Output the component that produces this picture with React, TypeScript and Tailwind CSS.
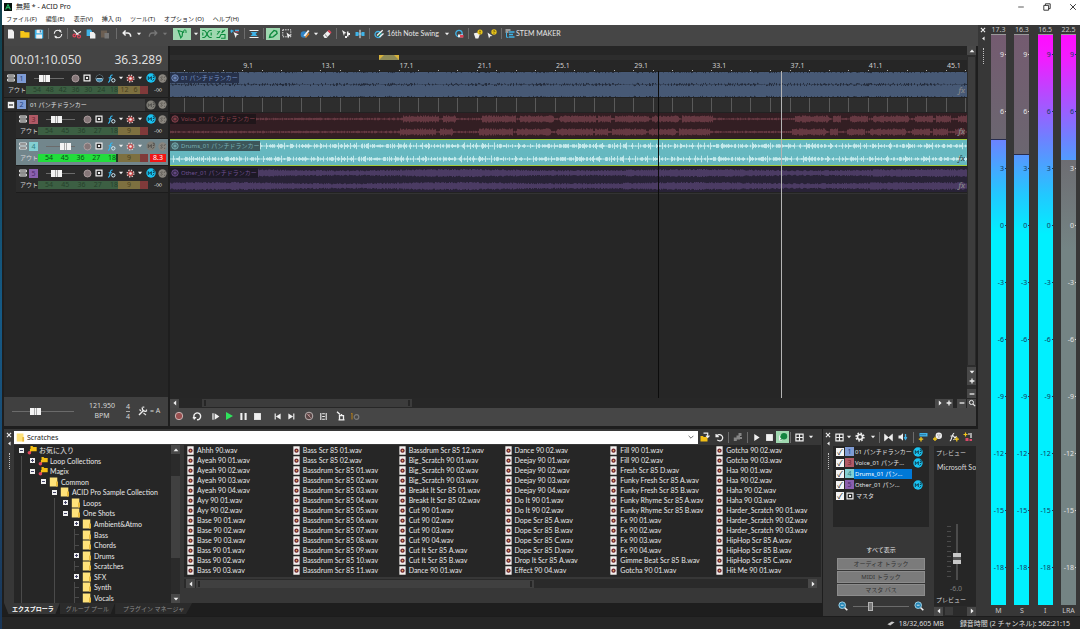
import type { ReactNode } from 'react'
import { useState } from 'react'
import clsx from 'clsx'

/* ---------- icons, all on a 10x10 grid ---------- */

const W = '#f0f0f0'
const BLUE = '#3fb3e8'
const GREEN = '#0b8a3c'

const glyphs: Record<string, ReactNode> = {
  new: <path d="M2 .5h4.2L8 2.400V9.500H2z" fill={W} />,
  open: <path d="M.3 2h3.500l1 1.200h4.700v5.600H.3z" fill="#f6c618" />,
  save: (
    <>
      <path d="M.8.8h8.400v8.600H.8z" fill={BLUE} />
      <path d="M2.600.8h5v3.400h-5zM2.200 5.600h5.800v3.800H2.200z" fill={W} />
      <path d="M5.800 1.200h1v2.200h-1z" fill="#1c4f86" />
    </>
  ),
  props: (
    <>
      <circle cx="5" cy="5" r="3.700" fill="none" stroke={W} strokeWidth="1.100" strokeDasharray="9.600 2" />
      <path d="M6.500.3l2 1.600-2.300 1zM3.500 9.700L1.500 8l2.300-1z" fill={W} />
    </>
  ),
  cut: (
    <>
      <path d="M1.500 1l5 5M9 2.500L3.500 5.800" stroke={W} strokeWidth="1.100" />
      <circle cx="7" cy="7.500" r="1.500" fill="none" stroke="#e0455a" strokeWidth="1.200" />
      <circle cx="2.400" cy="6.500" r="1.400" fill="none" stroke="#e0455a" strokeWidth="1.200" />
    </>
  ),
  copy: (
    <>
      <path d="M.6.6h4l1.400 1.400v5H.6z" fill={BLUE} />
      <path d="M4 3h3.500L9.400 5v4.600H4z" fill={W} />
    </>
  ),
  paste: (
    <>
      <path d="M1 1.500h6v7H1z" fill="#6b5e52" />
      <path d="M4.500 4H9v5.500H4.500z" fill="#777" />
    </>
  ),
  undo: <path d="M1.200 4h4.300c2.400 0 3.200 1.600 3.200 3.800M3.600 1.500L1.200 4l2.400 2.500" fill="none" stroke={W} strokeWidth="1.500" />,
  redo: <path d="M8.800 4H4.500C2.100 4 1.300 5.600 1.300 7.800M6.400 1.500L8.800 4 6.400 6.500" fill="none" stroke="#777" strokeWidth="1.300" />,
  caret: <path d="M1.500 3h7L5 7.200z" fill={W} />,
  caretDim: <path d="M1.500 3h7L5 7.200z" fill="#777" />,
  snap: (
    <>
      <path d="M1.200 1.500l4.300 1.300-.3 4.200L3.800 8.800z" fill="none" stroke={GREEN} strokeWidth="1.100" />
      <path d="M6.700 4V1.800c0-1.200 2.300-1.200 2.300 0V4" fill="none" stroke={GREEN} />
    </>
  ),
  crossfade: (
    <path d="M.3 1.500h1.700c3 0 3 7 6 7h1.700M.3 8.500h1.700c3 0 3-7 6-7h1.700M.8 3.500v3M9.200 3.500v3" fill="none" stroke={GREEN} strokeWidth="1.100" />
  ),
  ripple: (
    <path d="M.5 8.500h3l1.500-3h4v3.700H5M1 5.500l3-3.500M5.500 4L8.800 1M1.500 2.500h1M6 2h1.500" fill="none" stroke={GREEN} strokeWidth="1.100" />
  ),
  lock: (
    <>
      <path d="M3.500 3l5.500 2.400-2.400.9L5.700 9z" fill={W} />
      <path d="M.5 2h3M1.500.8v3M5 1.500h4" stroke={BLUE} strokeWidth="1.300" />
      <path d="M5.500 2.800h3" stroke="#e0455a" />
    </>
  ),
  envelope: (
    <>
      <path d="M.5 1.500h9M.5 8.500h9" stroke={W} />
      <path d="M1.500 3h7l-2 2 2 2h-7l2-2z" fill={BLUE} />
    </>
  ),
  pencil: <path d="M1.500 8.500l.7-3L6 1.500l2.600.8.5 2.200-4 3.300z" fill="none" stroke={GREEN} strokeWidth="1.300" />,
  select: (
    <>
      <path d="M.8.8h8v7h-8z" fill="none" stroke={W} strokeDasharray="1.300 1.100" />
      <path d="M4.500 3.500l5 3.600-2.200.2L6 9.500z" fill={W} />
    </>
  ),
  brush: (
    <>
      <circle cx="4" cy="5.500" r="3.300" fill="#2f83c5" />
      <path d="M3.500 6.500L8 1l1.500 1L5.200 7.400z" fill={W} />
      <path d="M5.500 8.500L9 4.500" stroke="#f08a24" strokeWidth="1.400" />
    </>
  ),
  eraser: (
    <>
      <path d="M1 6.500L5.500 2l3 2.800L4.500 9h-2z" fill={W} />
      <path d="M5.500 2L7 .7l2.500 2.600-1 1.500z" fill="#e0455a" />
      <path d="M3 5.600L5.500 8" stroke="#777" />
    </>
  ),
  arrows: <path d="M1 1l4.500 3-2 .6L3 7zM6 2.500h1.500v1.600H9V6H7.500v1.600H6zM4 7h2v2H4z" fill={W} />,
  split: (
    <>
      <path d="M.5 3h3v4h-3zM6.500 3h3v4h-3zM3.500 4.500h3v1h-3z" fill={BLUE} />
      <path d="M5 .8v8.400" stroke={W} />
    </>
  ),
  groove: (
    <>
      <circle cx="4" cy="5.500" r="3" fill="none" stroke={BLUE} strokeWidth="1.300" />
      <path d="M3 6.500L8.700 1.200M5.500 8l4-3.500" stroke={W} strokeWidth="1.300" />
      <path d="M4 7L7 4.300" stroke="#27b06d" />
    </>
  ),
  grooveClear: (
    <>
      <circle cx="5" cy="4.500" r="3.200" fill="none" stroke={BLUE} strokeWidth="1.300" />
      <path d="M4 5.500h5v2.800H4z" fill={W} />
      <path d="M6 6h3.500v2.500H6z" fill="#e0455a" />
    </>
  ),
  hint: (
    <>
      <path d="M.8 4.500c2-1 5-1 6 1l-1.500 4H2.500z" fill={W} />
      <circle cx="7" cy="3" r="2.600" fill="#e8c41c" />
      <path d="M7 1.600v1.800M7 4v.7" stroke="#4a3c00" />
    </>
  ),
  help: (
    <>
      <path d="M.5 3.500l5 3.500-2.300.3L2 9.500z" fill={W} />
      <circle cx="7" cy="3" r="2.700" fill="#e8c41c" />
      <path d="M6.200 2.300c.3-1 1.800-.8 1.600.2L7 3.400M7 4v.7" fill="none" stroke="#4a3c00" strokeWidth=".8" />
    </>
  ),
  stem: (
    <>
      <path d="M.5 1h5M.5 3h3" stroke={W} strokeWidth="1.200" />
      <path d="M4 3h5.500M4 5.500h4M4 8h5.500" stroke={BLUE} strokeWidth="1.400" />
      <path d="M1.500 3.500v4.800h2" fill="none" stroke={BLUE} />
    </>
  ),
  rec: <circle cx="5" cy="5" r="3.700" fill="#9a5050" stroke="#c9b4b4" strokeWidth="1" />,
  arm: <circle cx="5" cy="5" r="3.900" fill="#857678" stroke="#b8a8aa" strokeWidth=".9" />,
  loop: <path d="M2.300 7A3.400 3.400 0 1 1 5 8.700M.8 6.800h3.400M2.300 8.600V6" fill="none" stroke={W} strokeWidth="1.400" />,
  playStart: <path d="M1.500 1.500h1.400v7H1.500zM4 1.500L9.300 5 4 8.500z" fill={W} />,
  playGreen: <path d="M2 1l7 4-7 4z" fill="#2fe35c" />,
  play: <path d="M2.500 1l6 4-6 4z" fill={W} />,
  pause: <path d="M1.500 1h2.300v8H1.500zM6.200 1h2.300v8H6.200z" fill={W} />,
  stop: <path d="M1.200 1.200h7.600v7.600H1.200z" fill={W} />,
  prev: <path d="M1.800 1.800h1.300v6.400H1.800zM8.500 1.800v6.400L3.200 5z" fill={W} />,
  next: <path d="M6.900 1.800h1.300v6.400H6.900zM1.500 1.800v6.400L6.800 5z" fill={W} />,
  recMode: (
    <>
      <circle cx="5" cy="5" r="3.800" fill="#5b4747" stroke="#b9b0b0" />
      <path d="M3.300 3.300l1.700 1.700M5 3v2l1.700 1.700" stroke="#d0a5a5" fill="none" strokeWidth=".8" />
    </>
  ),
  chop: <path d="M2 1v8M8 1v8M3.500 2h3M3.500 5h3M3.500 8h3" stroke={W} strokeWidth="1.200" />,
  metronome: <path d="M1 .8l3 2.800M3.500 8.800V4.600h4v4.200zM4.800 3.600h1.400M2.500 8.800h6" fill="none" stroke={W} strokeWidth="1.300" />,
  metronomeDim: (
    <>
      <path d="M2 2v6.500M1 2.500h1" stroke="#a8761c" strokeWidth="1.200" />
      <circle cx="6.500" cy="6" r="2.300" fill="none" stroke="#7d7d7d" strokeWidth="1.200" />
    </>
  ),
  lanes: <path d="M.8 1.200h8.400v2.600H.8zM.8 6.200h8.400v2.600H.8z" fill="#555" stroke="#e8e8e8" strokeWidth="1.200" />,
  minusBox: (
    <>
      <path d="M1 1h8v8H1z" fill={W} />
      <path d="M2.500 5h5" stroke="#222" strokeWidth="1.400" />
    </>
  ),
  bus: (
    <>
      <path d="M1.300 1.300h7.400v7.400H1.300z" fill="#222" stroke={W} strokeWidth="1.500" />
      <path d="M3.700 3.700h2.600v2.600H3.700z" fill={W} />
    </>
  ),
  echo: (
    <>
      <circle cx="5" cy="5" r="3.900" fill="#3f88ae" stroke="#8fb0c0" strokeWidth="1" />
      <path d="M1.200 5h7.600a3.800 3.800 0 0 0-7.600 0z" fill="#222" />
      <path d="M2 5h6" stroke="#d6e6ee" strokeWidth=".8" />
    </>
  ),
  fx: (
    <>
      <path d="M1.200 9c1.600.3 1.800-1.500 2.200-4S4.300.8 6.200 1.200M1.800 4.200h3.600" fill="none" stroke="#35b6ee" strokeWidth="1.300" />
      <circle cx="7" cy="7" r="1.900" fill="none" stroke="#cfeaf6" strokeWidth="1.100" />
    </>
  ),
  gear: (
    <>
      <circle cx="5" cy="5" r="3.700" fill="none" stroke="#e8c4c4" strokeWidth="1.600" strokeDasharray="1.500 1.400" />
      <circle cx="5" cy="5" r="2.900" fill="#c94c4c" />
      <circle cx="5" cy="5" r="1.400" fill="#f6e6e6" />
    </>
  ),
  cog: (
    <>
      <circle cx="5" cy="5" r="3.900" fill="none" stroke={W} strokeWidth="1.500" strokeDasharray="1.600 1.460" />
      <circle cx="5" cy="5" r="2.500" fill="none" stroke={W} strokeWidth="1.600" />
    </>
  ),
  mute: (
    <>
      <circle cx="5" cy="5" r="4.700" fill="#19c3f2" />
      <path d="M2.300 7V3.600l1.500 2 1.500-2V7M6.800 2.200h1.400v2.300H6.800M6.500 7.500l1.800-1.500" fill="none" stroke="#0f3442" strokeWidth=".9" />
    </>
  ),
  muteOff: (
    <>
      <circle cx="5" cy="5" r="4.600" fill="#828079" />
      <path d="M2.300 7V3.600l1.500 2 1.500-2V7M6.800 2.200h1.400v2.300H6.800M6.500 7.500l1.800-1.500" fill="none" stroke="#4c4b47" strokeWidth=".9" />
    </>
  ),
  solo: (
    <>
      <circle cx="5" cy="5" r="4.600" fill="#8a867f" />
      <path d="M5.300 3.500c-1.500-.8-3 .2-1.600 1.300 1.700.8 1.400 2.600-1 1.900M6.500 4.500L8.300 2.300M6.700 7h1.300" fill="none" stroke="#55524b" strokeWidth=".9" />
    </>
  ),
  clip: (
    <>
      <circle cx="5" cy="5" r="4" fill="none" stroke="currentColor" strokeWidth="1.200" />
      <path d="M5 1.500v7M2 3.200l6 3.600M8 3.200L2 6.800" fill="none" stroke="currentColor" strokeWidth="1.100" />
    </>
  ),
  folder: (
    <>
      <path d="M.8.5h7.500v9H.8z" fill="#ffe27a" />
      <path d="M7 4.500h2v5H7z" fill="#e8b93c" />
    </>
  ),
  favorite: (
    <>
      <path d="M3.500 1h2l.8 1h3.400v4.200H3.500z" fill="#f3bf15" />
      <path d="M3.500 4v3" stroke="#f3bf15" strokeWidth="1.200" />
      <circle cx="2.400" cy="7.800" r="1.800" fill="#e0455a" />
    </>
  ),
  wav: (
    <>
      <path d="M1.500.3h7v9.400h-7z" fill="#f4f0ee" />
      <circle cx="5" cy="5.200" r="2.400" fill="#6b2430" />
      <circle cx="5" cy="5.200" r=".9" fill="#e8b060" />
    </>
  ),
  folderUp: (
    <>
      <path d="M.5 4h2.500l.7.900h3.800v4.600H.5z" fill="#f3bf15" />
      <path d="M3.500 1.200h4.200v3.800M6 3.700l1.700 1.800 1.800-1.800" fill="none" stroke={W} strokeWidth="1.200" />
    </>
  ),
  refresh: <path d="M2 3.500a3.500 3.500 0 1 1 .5 4.200M1.200 1v3h3" fill="none" stroke={W} strokeWidth="1.400" />,
  plug: <path d="M.8 5.500h3v3.500h-3zM3.500 3.500H7v4H3.500zM5.500 1h3v3h-3zM6.500 5h2.500v2H6.500z" fill="#858585" />,
  autoPreview: (
    <>
      <path d="M1 2.500v6h3z" fill={W} />
      <circle cx="6" cy="4.200" r="3.200" fill="#12843f" />
      <path d="M2 5h2M2.500 8l3-3" stroke="#12843f" />
    </>
  ),
  view: <path d="M1 1.300h8v7.400H1zM5 1.300v7.400M1 5h8" fill="none" stroke={W} strokeWidth="1.300" />,
  shrink: <path d="M.8 1.500L5 5 .8 8.500zM9.200 1.500L5 5l4.200 3.500zM.5 1v8M9.500 1v8" fill={W} stroke={W} strokeWidth=".6" />,
  dim: (
    <>
      <path d="M.5 3.500h2L5 1.200v7.600L2.500 6.500h-2z" fill={W} />
      <path d="M7.500 2v5M6.200 5.200l1.300 2 1.300-2" fill="none" stroke={BLUE} strokeWidth="1.300" />
    </>
  ),
  addBus: (
    <>
      <path d="M1.500 1h8v3.500h-8z" fill={BLUE} />
      <path d="M2.500 2.700h6" stroke="#16405c" strokeDasharray="1 1" />
      <path d="M3 5v4.500M.8 7.200h4.400" stroke="#f3c81c" strokeWidth="1.300" />
    </>
  ),
  addSynth: (
    <>
      <circle cx="5.800" cy="3.800" r="3.200" fill={W} />
      <path d="M2 4.800V9M0 7h4" stroke="#f3c81c" strokeWidth="1.300" />
      <path d="M4.500 3h.8M6.500 3h.8M5.500 5h.8" stroke="#333" />
    </>
  ),
  addFx: (
    <>
      <path d="M.8 8.800c2 .3 2-7.600 4.400-7.600M1.500 4h3.500M4.500 4.200l3 3.800M7.500 4.200l-3 3.600" fill="none" stroke={W} strokeWidth="1.100" />
      <path d="M7.800 5v4.500M5.600 7.200h4.300" stroke="#f3c81c" strokeWidth="1.200" />
    </>
  ),
  rewire: (
    <>
      <path d="M2.500.5v4M.5 2.500h4" stroke="#f3c81c" strokeWidth="1.200" />
      <path d="M5 2h2M8 1v5" stroke={W} strokeWidth="1.200" />
      <path d="M2.500 6h3v3h-3zM6.500 7h2.500v2H6.500z" fill="#d84a6a" />
    </>
  ),
  zoom: (
    <>
      <path d="M6 6l3.300 3.300" stroke={W} strokeWidth="1.600" />
      <circle cx="4.200" cy="4.200" r="3.300" fill="#2385b5" stroke="#9fd0e6" strokeWidth="1" />
      <path d="M2.800 4.200h2.800" stroke={W} strokeWidth=".9" />
    </>
  ),
  zoomTool: (
    <>
      <circle cx="4.300" cy="4.300" r="2.600" fill="none" stroke={W} strokeWidth="1.200" />
      <path d="M6.300 6.300L9 9" stroke={W} strokeWidth="1.400" />
    </>
  ),
  left: <path d="M6.500 2v6L3 5z" fill={W} />,
  right: <path d="M3.500 2v6L7 5z" fill={W} />,
  up: <path d="M2 6.500h6L5 3z" fill={W} />,
  down: <path d="M2 3.500h6L5 7z" fill={W} />,
  plus: <path d="M5 2v6M2 5h6" stroke={W} strokeWidth="1.600" />,
  minus: <path d="M2 5h6" stroke={W} strokeWidth="1.600" />,
  close: <path d="M1.500 1.500l7 7M8.500 1.500l-7 7" stroke={W} strokeWidth="1.800" />,
  fork: (
    <>
      <path d="M1 9l4.200-4.200M4.300 1.500c-.5 2.300 1.700 4.200 4 3.800" fill="none" stroke={W} strokeWidth="1.400" />
      <path d="M4.500 1.200h1.800M8.500 3.500v2M1.500 3.500l1.500 1.500M5.500 7l2.500 2" stroke="#ddd" strokeWidth="1.200" />
    </>
  ),
  drive: <path d="M.5 6.500L6 3l3.500 1.200L4 8z" fill="#c8c8c8" />,
}

type IconProps = { name: string; className?: string }

function Icon({ name, className = 'size-[10px]' }: IconProps) {
  return (
    <svg viewBox="0 0 10 10" className={clsx('block shrink-0', className)} aria-hidden="true">
      {glyphs[name]}
    </svg>
  )
}

type ToolProps = { icon: string; label: string; className?: string; size?: string }

function Tool({ icon, label, className = 'w-[14px]', size }: ToolProps) {
  return (
    <button type="button" aria-label={label} className={clsx('flex h-3 shrink-0 items-center justify-center', className)}>
      <Icon name={icon} className={size} />
    </button>
  )
}

function Caret({ dim = false, className = 'w-3' }: { dim?: boolean; className?: string }) {
  return <Tool icon={dim ? 'caretDim' : 'caret'} label="More" className={className} size="size-[6px]" />
}

function Sep({ className = 'mx-0.5' }: { className?: string }) {
  return <span className={clsx('h-[11px] w-px shrink-0 bg-[#6c6c6c]', className)} />
}

function ScrollButton({ icon, label }: { icon: string; label: string }) {
  return (
    <button type="button" aria-label={label} className="flex size-[9px] shrink-0 items-center justify-center bg-[#484848]">
      <Icon name={icon} className="size-[8px]" />
    </button>
  )
}

/* ---------- title, menu and main toolbar ---------- */

const menus = ['ファイル(F)', '編集(E)', '表示(V)', '挿入 (I)', 'ツール(T)', 'オプション (O)', 'ヘルプ(H)']

function TitleBar() {
  return (
    <header className="bg-white text-[#222]">
      <div className="flex h-[13px] items-center pl-0.5">
        <svg viewBox="0 0 10 10" className="size-2" aria-hidden="true">
          <path d="M0 0h10v10H0z" fill="#07120d" />
          <path d="M2 8L5 2l3 6M3.300 6h3.400" fill="none" stroke="#25c46a" strokeWidth="1.300" />
        </svg>
        <span className="ml-1 text-[7px]">無題 * - ACID Pro</span>
        <div className="ml-auto flex gap-4 pr-0.5">
          <button type="button" aria-label="Minimize" className="flex size-[10px] items-center justify-center">
            <svg viewBox="0 0 10 10" className="size-2">
              <path d="M1.500 5h7" stroke="#333" />
            </svg>
          </button>
          <button type="button" aria-label="Restore" className="flex size-[10px] items-center justify-center">
            <svg viewBox="0 0 10 10" className="size-2">
              <path d="M1 3h6v6H1zM3 3V1h6v6H7" fill="none" stroke="#333" strokeWidth="1.200" />
            </svg>
          </button>
          <button type="button" aria-label="Close" className="flex size-[10px] items-center justify-center">
            <svg viewBox="0 0 10 10" className="size-2">
              <path d="M1.500 1.500l7 7M8.500 1.500l-7 7" stroke="#333" strokeWidth="1.200" />
            </svg>
          </button>
        </div>
      </div>
      <nav className="flex h-3 items-center gap-[9px] pl-1 text-[6px]">
        {menus.map((m) => (
          <button key={m} type="button" className="whitespace-nowrap">
            {m}
          </button>
        ))}
      </nav>
    </header>
  )
}

function Toolbar() {
  return (
    <div className="flex h-[21px] shrink-0 items-center overflow-hidden bg-[#464646] pb-1 font-['Lato',sans-serif] text-[7px] text-[#e6e6e6]">
      <Tool icon="new" label="New" />
      <Tool icon="open" label="Open" />
      <Tool icon="save" label="Save" />
      <Sep />
      <Tool icon="props" label="Properties" />
      <Sep />
      <Tool icon="cut" label="Cut" />
      <Tool icon="copy" label="Copy" />
      <Tool icon="paste" label="Paste" />
      <Sep className="mx-1" />
      <Tool icon="undo" label="Undo" className="w-3" />
      <Caret />
      <Tool icon="redo" label="Redo" className="w-4" />
      <Caret dim className="w-2" />
      <Tool icon="snap" label="Snap" className="ml-1 w-[18px] bg-[#9fd8b0]" />
      <Caret className="w-[9px]" />
      <Tool icon="crossfade" label="Automatic crossfades" className="w-[14px] bg-[#9fd8b0]" />
      <Tool icon="ripple" label="Ripple edits" className="w-[14px] bg-[#9fd8b0]" />
      <Tool icon="lock" label="Lock envelopes" />
      <Sep />
      <Tool icon="envelope" label="Envelopes" />
      <Sep />
      <Tool icon="pencil" label="Draw tool" className="w-[14px] bg-[#9fd8b0]" />
      <Tool icon="select" label="Selection tool" />
      <Tool icon="brush" label="Paint tool" className="ml-1 w-[14px]" />
      <Caret className="w-2" />
      <Tool icon="eraser" label="Erase tool" />
      <Sep />
      <Tool icon="arrows" label="Move" />
      <Tool icon="split" label="Split" />
      <Sep />
      <Tool icon="groove" label="Groove" />
      <button type="button" className="flex w-[64px] items-center justify-between whitespace-nowrap pl-px">
        16th Note Swing
        <Icon name="caret" className="size-[6px]" />
      </button>
      <Tool icon="grooveClear" label="Clear groove" className="ml-0.5 w-[14px]" />
      <Sep />
      <Tool icon="hint" label="Hints" />
      <Tool icon="help" label="Help" />
      <Sep />
      <Tool icon="stem" label="Stem maker" className="w-3" />
      <button type="button" className="whitespace-nowrap">
        STEM MAKER
      </button>
    </div>
  )
}

/* ---------- tracks ---------- */

type Track = {
  id: number
  name: string
  nested: boolean
  selected?: boolean
  volume: number
  badge: string
  lane: string
  label: string
}

const tracks: Track[] = [
  {
    id: 1,
    name: '01 パンチドランカー',
    nested: false,
    volume: 28,
    badge: 'bg-[#7f9bd4] text-[#23407c]',
    lane: 'bg-[#242c3c]',
    label: 'bg-[#26314a] text-[#7793c8]',
  },
  {
    id: 3,
    name: 'Voice_01 パンチドランカー',
    nested: true,
    volume: 30,
    badge: 'bg-[#b05a66] text-[#6b2430]',
    lane: 'bg-[#331e23]',
    label: 'bg-[#20161a] text-[#8e4450]',
  },
  {
    id: 4,
    name: 'Drums_01 パンチドランカー',
    nested: true,
    selected: true,
    volume: 78,
    badge: 'bg-[#84cfd2] text-[#2d7f84]',
    lane: 'bg-[#66b8c0]',
    label: 'bg-[#3c5559] text-[#79b0b4]',
  },
  {
    id: 5,
    name: 'Other_01 パンチドランカー',
    nested: true,
    volume: 30,
    badge: 'bg-[#8a5fae] text-[#4b2a6b]',
    lane: 'bg-[#282236]',
    label: 'bg-[#1d1926] text-[#6d4f90]',
  },
]

const rangeTrack =
  'appearance-none bg-transparent [&::-webkit-slider-runnable-track]:bg-[linear-gradient(#6b6b6b,#6b6b6b)] [&::-webkit-slider-runnable-track]:bg-[length:100%_1px] [&::-webkit-slider-runnable-track]:bg-center [&::-webkit-slider-runnable-track]:bg-no-repeat [&::-webkit-slider-thumb]:appearance-none'

const wideThumb =
  '[&::-webkit-slider-thumb]:h-[7px] [&::-webkit-slider-thumb]:w-[11px] [&::-webkit-slider-thumb]:bg-[linear-gradient(90deg,#f4f4f4_4px,#aaa_4px,#aaa_5px,#f4f4f4_5px,#f4f4f4_6px,#aaa_6px,#aaa_7px,#f4f4f4_7px)]'

const slimThumb =
  '[&::-webkit-slider-thumb]:h-[9px] [&::-webkit-slider-thumb]:w-[5px] [&::-webkit-slider-thumb]:border [&::-webkit-slider-thumb]:border-[#b4b4b4] [&::-webkit-slider-thumb]:bg-[#777]'

function NumberBadge({ id, className }: { id: number; className: string }) {
  return (
    <span className={clsx('flex size-[9px] shrink-0 items-center justify-center text-[7px] leading-none', className)}>{id}</span>
  )
}

function Meter({ nested, live }: { nested: boolean; live?: boolean }) {
  const marks = nested ? ['54', '45', '36', '27', '18'] : ['54', '48', '42', '36', '30', '24', '18']
  const high = nested ? ['9'] : ['12', '6']
  return (
    <div className="flex h-[8px] min-w-0 flex-1 text-[7px] leading-[8px]">
      <div
        className={clsx(
          'flex flex-1 justify-between pl-[7px]',
          live ? 'bg-[#22dd3c] text-[#075214]' : 'bg-[#3c5f43] text-[#26402b]',
        )}
      >
        {marks.map((m) => (
          <span key={m}>{m}</span>
        ))}
      </div>
      {live ? <span className="w-0.5 bg-[#1b3b1f]" /> : null}
      <div className="flex w-[22px] justify-around bg-[#7d7040] text-[#4a4220]">
        {high.map((m) => (
          <span key={m}>{m}</span>
        ))}
      </div>
      <span className="w-2 bg-[#803a3a]" />
    </div>
  )
}

function TrackHeader({ track, selected, onSelect }: { track: Track; selected: boolean; onSelect: () => void }) {
  return (
    <div
      onClick={onSelect}
      className={clsx(
        'flex h-[27px] shrink-0 flex-col justify-center border-b border-[#1c1c1c]',
        track.nested ? 'ml-3' : '',
        selected ? 'bg-[#72868c]' : 'bg-[#2b2b2b]',
      )}
    >
      <div className="flex h-3 items-center">
        <Tool icon="lanes" label="Lanes" className="w-[13px]" size="size-[8px]" />
        <NumberBadge id={track.id} className={track.badge} />
        <input
          type="range"
          aria-label={`Volume ${track.id}`}
          defaultValue={track.volume}
          className={clsx(rangeTrack, wideThumb, 'ml-2 h-2', track.nested ? 'w-[29px]' : 'w-[30px]')}
        />
        <div className="ml-auto flex items-center">
          <Tool icon="arm" label="Arm" className="w-3" size="size-[9px]" />
          <Tool icon="bus" label="Bus" className="w-3" size="size-[8px]" />
          {track.nested ? null : <Tool icon="echo" label="Input" className="w-3" size="size-[9px]" />}
          <Tool icon="fx" label="Track FX" className="w-3" size="size-[9px]" />
          <Caret className="w-2" />
          <Tool icon="gear" label="Automation" className="w-[10px]" size="size-[9px]" />
          <Caret className="w-[10px]" />
          <Tool icon={selected ? 'muteOff' : 'mute'} label="Mute" className="w-[11px]" />
          <Tool icon="solo" label="Solo" className="w-[12px]" size="size-[9px]" />
        </div>
      </div>
      <div className="flex h-3 items-center pl-1 text-[6px] text-[#d8d8d8]">
        <span className="w-[18px] shrink-0">アウト</span>
        <Meter nested={track.nested} live={track.selected} />
        {track.selected ? (
          <span className="mx-0.5 w-4 bg-[#f01515] text-center text-[7px] leading-[8px] text-white">8.3</span>
        ) : (
          <span className="w-5 text-center">-∞</span>
        )}
      </div>
    </div>
  )
}

function FolderHeader() {
  return (
    <div className="flex h-[14px] shrink-0 items-center border-b border-[#1c1c1c] bg-[#2b2b2b]">
      <Tool icon="minusBox" label="Collapse" className="w-[13px]" size="size-[8px]" />
      <NumberBadge id={2} className="bg-[#7f9bd4] text-[#23407c]" />
      <span className="ml-0.5 flex h-[12px] flex-1 items-center bg-[#3c3c3c] pl-0.5 text-[6px] text-[#e0e0e0]">01 パンチドランカー</span>
      <Tool icon="muteOff" label="Mute" className="w-[11px]" />
      <Tool icon="solo" label="Solo" className="w-[12px]" size="size-[9px]" />
    </div>
  )
}

/* deterministic noise for the wave forms */
function noise(i: number, seed: number) {
  const v = Math.sin(i * 12.9898 + seed * 78.233) * 43758.5453
  return v - Math.floor(v)
}

const voiced = [
  [233, 268], [273, 285], [312, 345], [350, 383], [390, 425], [428, 440], [445, 478], [482, 508],
  [512, 542], [625, 658], [663, 670], [680, 697], [703, 738], [745, 762], [766, 780], [788, 797],
]

function amplitude(id: number, x: number) {
  const n = noise(x, id)
  if (id === 1) return 6.6 - n * n * 1.800
  if (id === 3) {
    const loud = voiced.some(([a, b]) => x >= a && x <= b)
    return loud ? 2.2 + n * 1.5 : 0.4 + n * 0.9
  }
  if (id === 4) return x % 6 === 0 ? 1.600 + n * 1.900 : 0.4 + n * n * 1.900
  return 2.2 + Math.sin(x / 37) * 0.6 + n * 1.3
}

const waveColor: Record<number, string> = { 1: '#475975', 3: '#663942', 4: '#c3e9eb', 5: '#4b3b63' }

function wavePath(id: number, center: number) {
  let d = ''
  for (let x = 0; x < 797; x++) {
    const a = amplitude(id, x + (center > 10 ? 3 : 0))
    d += `M${x + 0.5} ${(center - a).toFixed(1)}v${(a * 2).toFixed(1)}`
  }
  return d
}

function Lane({ track, selected }: { track: Track; selected: boolean }) {
  return (
    <div
      className={clsx(
        'relative h-[27px] shrink-0 border-y',
        track.lane,
        selected ? 'border-[#a3cc3c]' : 'border-[#222]',
      )}
    >
      <svg viewBox="0 0 797 25" preserveAspectRatio="none" className="block size-full" aria-hidden="true">
        <path d={wavePath(track.id, 6)} stroke={waveColor[track.id]} />
        <path d={wavePath(track.id, 19)} stroke={waveColor[track.id]} />
      </svg>
      <div className={clsx('absolute left-0 top-px flex h-[10px] items-center gap-0.5 px-px text-[6px] leading-none', track.label)}>
        <Icon name="clip" className="size-[8px]" />
        {track.name}
      </div>
      <span
        className={clsx(
          'absolute bottom-0.5 right-0.5 font-serif text-[9px] italic leading-none',
          selected ? 'text-[#27444a]' : 'text-[#8c8c8c]',
        )}
      >
        fx
      </span>
    </div>
  )
}

const bars = ['', '9.1', '13.1', '17.1', '21.1', '25.1', '29.1', '33.1', '37.1', '41.1', '45.1']

/* one cell is four bars wide, the first one starts left of the view */
function BarGrid({ labels = false }: { labels?: boolean }) {
  return (
    <div className="-ml-1.5 flex h-full">
      {bars.map((bar) => (
        <div key={bar} className="flex shrink-0 flex-col justify-end" style={{ width: `${100 / 10.27}%` }}>
          {labels ? <span className="h-2 whitespace-nowrap pl-px text-[7px] leading-[8px] text-[#d0d0d0]">{bar}</span> : null}
          <div className={clsx('grid grid-cols-4', labels ? 'h-px' : 'h-full')}>
            {[0, 1, 2, 3].map((n) => (
              <span key={n} className={clsx('border-l', labels ? 'border-[#b0b0b0]' : 'border-[#5a5a5a]')} />
            ))}
          </div>
        </div>
      ))}
    </div>
  )
}

function TrackList({ selected, onSelect }: { selected: number; onSelect: (id: number) => void }) {
  return (
    <section className="flex w-[164px] shrink-0 flex-col bg-[#262626]">
      <div className="flex h-[25px] items-center justify-between bg-[#444] px-1.5 pt-0.5 text-[12px] text-[#dedede]">
        <span>00:01:10.050</span>
        <span>36.3.289</span>
      </div>
      {tracks.map((t) => (
        <div key={t.id} className="contents">
          <TrackHeader track={t} selected={t.id === selected} onSelect={() => onSelect(t.id)} />
          {t.id === 1 ? <FolderHeader /> : null}
        </div>
      ))}
      <div className="mt-auto flex h-[29px] items-center bg-[#404040] pb-px text-[7px] leading-[10px] text-[#d6d6d6]">
        <input type="range" aria-label="Tempo" defaultValue={36} className={clsx(rangeTrack, wideThumb, 'ml-2 h-2 w-[62px]')} />
        <div className="ml-3 w-8 text-center">
          121.950
          <br />
          BPM
        </div>
        <div className="ml-1.5 flex w-2 flex-col items-center leading-[9px]">
          <span className="border-b border-[#aaa]">4</span>
          <span>4</span>
        </div>
        <span className="ml-1.5 flex items-center gap-0.5 whitespace-nowrap">
          <Icon name="fork" />= A
        </span>
      </div>
    </section>
  )
}

function Timeline({ selected }: { selected: number }) {
  return (
    <section className="flex min-w-0 flex-1 flex-col bg-[#262626]">
      <div className="flex min-h-0 flex-1">
        <div className="relative flex min-w-0 flex-1 flex-col overflow-hidden">
          <div className="flex h-[25px] shrink-0 flex-col">
            <div className="mt-[9px] h-[5px] bg-[#2d2d2d]">
              <div className="ml-[26.2%] flex h-full w-5 justify-between bg-[#8d8a58]">
                <span className="border-b-[5px] border-l-[5px] border-b-transparent border-l-[#d8b23a]" />
                <span className="border-b-[5px] border-r-[5px] border-b-transparent border-r-[#d8b23a]" />
              </div>
            </div>
            <div className="min-h-0 flex-1">
              <BarGrid labels />
            </div>
          </div>
          {tracks.map((t) => (
            <div key={t.id} className="contents">
              <Lane track={t} selected={t.id === selected} />
              {t.id === 1 ? (
                <div className="h-[14px] shrink-0 bg-[#2d2d2d]">
                  <BarGrid />
                </div>
              ) : null}
            </div>
          ))}
          <div className="border-t border-[#333]" />
          {/* edit cursor and play head */}
          <span className="absolute bottom-0 left-[61.2%] top-[25px] w-px bg-[#0c0c0c]" />
          <span className="absolute bottom-0 left-[76.7%] top-[25px] w-px bg-[#b4b4b4]" />
        </div>
        <div className="flex w-[9px] shrink-0 flex-col bg-[#2d2d2d]">
          <ScrollButton icon="up" label="Scroll up" />
          <div className="my-0.5 flex-1 border-x border-[#2a2a2a] bg-[#3c3c3c]" />
          <ScrollButton icon="down" label="Scroll down" />
          <ScrollButton icon="plus" label="Zoom in" />
          <div className="h-1" />
          <ScrollButton icon="minus" label="Zoom out" />
        </div>
      </div>
      <div className="flex h-[10px] shrink-0 items-center bg-[#272727]">
        <ScrollButton icon="left" label="Scroll left" />
        <div className="ml-[23px] flex h-2 w-[26%] items-center justify-between bg-[#3c3c3c] px-0.5">
          <span className="h-1.5 w-0.5 bg-[#262626]" />
          <span className="h-1.5 w-0.5 bg-[#262626]" />
        </div>
        <div className="ml-auto flex">
          <ScrollButton icon="right" label="Scroll right" />
          <ScrollButton icon="plus" label="Zoom in" />
          <span className="w-1" />
          <ScrollButton icon="minus" label="Zoom out" />
          <span className="w-px" />
          <ScrollButton icon="zoomTool" label="Zoom tool" />
        </div>
      </div>
      <div className="flex h-[18px] shrink-0 items-center bg-[#464646] pb-0.5 pl-0.5">
        <Tool icon="rec" label="Record" />
        <Tool icon="loop" label="Loop" className="mx-1 w-[14px]" />
        <Tool icon="playStart" label="Play from start" size="size-[9px]" />
        <Tool icon="playGreen" label="Play" />
        <Tool icon="pause" label="Pause" size="size-[9px]" />
        <Tool icon="stop" label="Stop" size="size-[9px]" />
        <Tool icon="prev" label="Go to start" className="ml-1.5 w-[14px]" size="size-[9px]" />
        <Tool icon="next" label="Go to end" size="size-[9px]" />
        <Tool icon="recMode" label="Record mode" className="ml-1 w-[14px]" />
        <Tool icon="chop" label="Chopper" size="size-[9px]" />
        <Tool icon="metronome" label="Metronome" className="ml-1 w-[14px]" />
        <Tool icon="metronomeDim" label="Count in" />
      </div>
    </section>
  )
}

/* ---------- explorer ---------- */

function PanelGrip() {
  return (
    <div className="flex w-[10px] shrink-0 flex-col items-center gap-0.5 pt-0.5">
      <button type="button" aria-label="Close panel">
        <Icon name="close" className="size-[6px]" />
      </button>
      <button type="button" aria-label="Collapse panel">
        <Icon name="left" className="size-[7px]" />
      </button>
      <span className="mt-1 h-4 border-l border-dotted border-[#c0c0c0]" />
    </div>
  )
}

type Node = { name: string; depth: number; toggle?: '+' | '-'; icon?: string; guides?: number[] }

const tree: Node[] = [
  { name: 'お気に入り', depth: 0, toggle: '-', icon: 'favorite' },
  { name: 'Loop Collections', depth: 1, toggle: '+', icon: 'favorite', guides: [0] },
  { name: 'Magix', depth: 1, toggle: '-', icon: 'favorite', guides: [0] },
  { name: 'Common', depth: 2, toggle: '-', guides: [0] },
  { name: 'ACID Pro Sample Collection', depth: 3, toggle: '-', guides: [0] },
  { name: 'Loops', depth: 4, toggle: '+', guides: [0, 3] },
  { name: 'One Shots', depth: 4, toggle: '-', guides: [0, 3] },
  { name: 'Ambient&Atmo', depth: 5, toggle: '+', guides: [0, 3] },
  { name: 'Bass', depth: 5, guides: [0, 3] },
  { name: 'Chords', depth: 5, guides: [0, 3] },
  { name: 'Drums', depth: 5, toggle: '+', guides: [0, 3] },
  { name: 'Scratches', depth: 5, guides: [0, 3] },
  { name: 'SFX', depth: 5, toggle: '+', guides: [0, 3] },
  { name: 'Synth', depth: 5, guides: [0, 3] },
  { name: 'Vocals', depth: 5, guides: [0, 3] },
]

function TreeRow({ node }: { node: Node }) {
  const levels = Array.from({ length: node.depth }, (_, i) => i)
  return (
    <li className="flex min-h-0 flex-1 items-stretch">
      {levels.map((l) => (
        <span key={l} className="flex w-[11px] shrink-0 justify-center">
          {node.guides?.includes(l) ? <span className="w-px bg-[#4a4a4a]" /> : null}
        </span>
      ))}
      <span className="flex w-[11px] shrink-0 items-center justify-center">
        {node.toggle ? (
          <button type="button" aria-label={`Toggle ${node.name}`} className="flex size-[5px] items-center justify-center bg-[#f0f0f0]">
            <svg viewBox="0 0 5 5" className="size-[5px]">
              <path d={node.toggle === '+' ? 'M2.500 1v3M1 2.500h3' : 'M1 2.500h3'} stroke="#446" />
            </svg>
          </button>
        ) : (
          <span className="flex h-full items-center">
            <span className="h-full w-px bg-[#4a4a4a]" />
            <span className="h-px w-1 bg-[#4a4a4a]" />
          </span>
        )}
      </span>
      <button type="button" className="flex items-center whitespace-nowrap">
        <Icon name={node.icon ?? 'folder'} className="size-[10px]" />
        <span className="ml-0.5">{node.name}</span>
      </button>
    </li>
  )
}

const files = [
  ['Ahhh 90', 'Ayeah 90 01', 'Ayeah 90 02', 'Ayeah 90 03', 'Ayeah 90 04', 'Ayy 90 01', 'Ayy 90 02', 'Base 90 01', 'Base 90 02', 'Base 90 03', 'Bass 90 01', 'Bass 90 02', 'Bass 90 03'],
  ['Bass Scr 85 01', 'Bass Scr 85 02', 'Bassdrum Scr 85 01', 'Bassdrum Scr 85 02', 'Bassdrum Scr 85 03', 'Bassdrum Scr 85 04', 'Bassdrum Scr 85 05', 'Bassdrum Scr 85 06', 'Bassdrum Scr 85 07', 'Bassdrum Scr 85 08', 'Bassdrum Scr 85 09', 'Bassdrum Scr 85 10', 'Bassdrum Scr 85 11'],
  ['Bassdrum Scr 85 12', 'Big_Scratch 90 01', 'Big_Scratch 90 02', 'Big_Scratch 90 03', 'Breakt It Scr 85 01', 'Breakt It Scr 85 02', 'Cut 90 01', 'Cut 90 02', 'Cut 90 03', 'Cut 90 04', 'Cut It Scr 85 A', 'Cut It Scr 85 B', 'Dance 90 01'],
  ['Dance 90 02', 'Deejay 90 01', 'Deejay 90 02', 'Deejay 90 03', 'Deejay 90 04', 'Do It 90 01', 'Do It 90 02', 'Dope Scr 85 A', 'Dope Scr 85 B', 'Dope Scr 85 C', 'Dope Scr 85 D', 'Drop It Scr 85 A', 'Effect 90 04'],
  ['Fill 90 01', 'Fill 90 02', 'Fresh Scr 85 D', 'Funky Fresh Scr 85 A', 'Funky Fresh Scr 85 B', 'Funky Rhyme Scr 85 A', 'Funky Rhyme Scr 85 B', 'Fx 90 01', 'Fx 90 02', 'Fx 90 03', 'Fx 90 04', 'Gimme Beat Scr 85 B', 'Gotcha 90 01'],
  ['Gotcha 90 02', 'Gotcha 90 03', 'Haa 90 01', 'Haa 90 02', 'Haha 90 02', 'Haha 90 03', 'Harder_Scratch 90 01', 'Harder_Scratch 90 02', 'Harder_Scratch 90 03', 'HipHop Scr 85 A', 'HipHop Scr 85 B', 'HipHop Scr 85 C', 'Hit Me 90 01'],
]

function Explorer() {
  return (
    <section className="flex min-w-0 flex-1 flex-col">
      <div className="flex h-[174px] bg-[#373737] pt-px">
        <PanelGrip />
        <div className="flex min-w-0 flex-1 flex-col">
          <div className="flex h-[14px] shrink-0 items-center pr-1">
            <div className="flex h-[13px] flex-1 items-center bg-white pl-0.5 pr-1 text-[#222]">
              <Icon name="folder" className="size-[9px]" />
              <select aria-label="Folder" className="ml-0.5 h-full flex-1 appearance-none text-[7px] leading-[13px]">
                <option>Scratches</option>
              </select>
              <svg viewBox="0 0 10 10" className="size-[6px]" aria-hidden="true">
                <path d="M1 3l4 4 4-4" fill="none" stroke="#555" strokeWidth="1.400" />
              </svg>
            </div>
            <Tool icon="folderUp" label="Up one level" />
            <Tool icon="refresh" label="Refresh" size="size-[9px]" />
            <Sep />
            <Tool icon="plug" label="Get media" />
            <Sep />
            <Tool icon="play" label="Start preview" className="w-[13px]" size="size-[9px]" />
            <Tool icon="stop" label="Stop preview" className="w-[13px]" size="size-[9px]" />
            <Tool icon="autoPreview" label="Auto preview" className="w-[13px] bg-[#9fd8b0]" />
            <Sep className="mx-px" />
            <Tool icon="view" label="View" size="size-[9px]" />
            <Caret className="mr-[3px] w-[9px]" />
          </div>
          <div className="mt-px flex min-h-0 flex-1">
            <ul className="flex w-[157px] shrink-0 flex-col overflow-hidden bg-[#262626] pl-0.5 font-['Lato','Noto_Sans_CJK_JP',sans-serif] text-[7px] leading-[10px] text-[#e8e8e8]">
              {tree.map((n) => (
                <TreeRow key={n.name} node={n} />
              ))}
            </ul>
            <div className="flex w-[9px] shrink-0 flex-col bg-[#2b2b2b]">
              <ScrollButton icon="up" label="Scroll up" />
              <div className="mt-[22px] h-[82px] bg-[#404040]" />
              <div className="mt-auto">
                <ScrollButton icon="down" label="Scroll down" />
              </div>
            </div>
            <div className="ml-1 flex min-w-0 flex-1 flex-col pr-px">
              <div className="grid h-[132px] grid-cols-6 overflow-hidden bg-[#262626] pl-0.5 font-['Lato',sans-serif] text-[7px] leading-[10px] text-[#e8e8e8]">
                {files.map((col) => (
                  <ul key={col[0]} className="min-w-0">
                    {col.map((f) => (
                      <li key={f}>
                        <button type="button" className="flex h-[10px] items-center gap-0.5 whitespace-nowrap">
                          <Icon name="wav" className="size-[9px]" />
                          {f}.wav
                        </button>
                      </li>
                    ))}
                  </ul>
                ))}
              </div>
              <div className="mr-1 mt-0.5 flex h-[9px] items-center bg-[#2a2a2a] pl-0.5">
                <ScrollButton icon="left" label="Scroll left" />
                <div className="ml-px flex h-2 w-[53.500%] items-center justify-between bg-[#404040] px-0.5">
                  <span className="h-1.5 w-0.5 bg-[#262626]" />
                  <span className="h-1.5 w-0.5 bg-[#262626]" />
                </div>
                <div className="ml-auto">
                  <ScrollButton icon="right" label="Scroll right" />
                </div>
              </div>
            </div>
          </div>
        </div>
      </div>
      <div className="flex h-[11px] items-center text-[6px] text-[#8c8c8c]">
        <button type="button" className="h-full bg-[#373737] pl-2 pr-1.5 font-bold text-white [clip-path:polygon(0_0,100%_0,92%_100%,8%_100%)]">
          エクスプローラ
        </button>
        <button type="button" className="h-full bg-[#2b2b2b] px-1.5 [clip-path:polygon(0_0,100%_0,92%_100%,0_100%)]">
          グループ プール
        </button>
        <button type="button" className="h-full bg-[#2b2b2b] px-2 [clip-path:polygon(0_0,100%_0,92%_100%,0_100%)]">
          プラグイン マネージャ
        </button>
      </div>
    </section>
  )
}

/* ---------- mixer ---------- */

const mixerRows = [
  { id: 1, name: '01 パンチドランカー', badge: 'bg-[#7f9bd4] text-[#23407c]', muted: true },
  { id: 3, name: 'Voice_01 パンチ...', badge: 'bg-[#b05a66] text-[#6b2430]', muted: true },
  { id: 4, name: 'Drums_01 パン...', badge: 'bg-[#84cfd2] text-[#2d7f84]', muted: false },
  { id: 5, name: 'Other_01 パン...', badge: 'bg-[#8a5fae] text-[#4b2a6b]', muted: true },
]

const checkbox =
  "size-[8px] shrink-0 appearance-none bg-[#f4f4f4] checked:after:block checked:after:text-center checked:after:text-[8px] checked:after:leading-[8px] checked:after:text-[#222] checked:after:content-['✓']"

function Mixer({ selected }: { selected: number }) {
  return (
    <section className="flex w-[155px] shrink-0 bg-[#373737] pt-px">
      <PanelGrip />
      <div className="flex min-w-0 flex-1 flex-col pr-0.5">
        <div className="flex h-[14px] shrink-0 items-center">
          <Tool icon="view" label="View" className="w-3" size="size-[9px]" />
          <Caret className="w-2" />
          <Tool icon="cog" label="Settings" />
          <Caret className="w-3" />
          <Sep className="mr-px" />
          <Tool icon="shrink" label="Downmix" className="w-[14px]" size="size-[9px]" />
          <Tool icon="dim" label="Dim output" className="w-4" />
          <Sep className="mx-0.5" />
          <Tool icon="addBus" label="Insert bus" />
          <Tool icon="addSynth" label="Insert synth" className="w-4" />
          <Tool icon="addFx" label="Insert effect" className="w-4" />
          <Tool icon="rewire" label="Insert ReWire" className="w-3" />
        </div>
        <div className="mt-0.5 flex min-h-0 flex-1 justify-between">
          <div className="flex w-[96px] flex-col">
            <div className="h-[81px] bg-[#262626] text-[#e4e4e4]">
              {mixerRows.map((r) => (
                <div key={r.id} className="flex h-[11px] items-center pl-[3px]">
                  <input id={`mix-${r.id}`} type="checkbox" defaultChecked className={checkbox} />
                  <label htmlFor={`mix-${r.id}`} className="ml-px flex h-[10px] items-center whitespace-nowrap text-[6px]">
                    <NumberBadge id={r.id} className={r.badge} />
                    <span
                      className={clsx(
                        'flex h-[10px] w-[58px] items-center overflow-hidden pl-px',
                        r.id === selected && 'bg-[#0078d7] text-white',
                      )}
                    >
                      {r.name}
                    </span>
                  </label>
                  {r.muted ? <Tool icon="mute" label="Mute" className="w-3" /> : null}
                </div>
              ))}
              <div className="flex h-[11px] items-center pl-[3px]">
                <input id="mix-master" type="checkbox" defaultChecked className={checkbox} />
                <label htmlFor="mix-master" className="ml-0.5 flex items-center gap-0.5 text-[6px]">
                  <Icon name="bus" className="size-2" />
                  マスタ
                </label>
              </div>
            </div>
            <div className="mx-1 mt-auto flex flex-col gap-px text-center text-[6px]">
              <span className="mb-1 text-[#e4e4e4]">すべて表示</span>
              {['オーディオ トラック', 'MIDI トラック', 'マスタ バス'].map((b) => (
                <button key={b} type="button" className="h-3 border border-[#8c8c8c] bg-[#7b7b7b] leading-[10px] text-[#333]">
                  {b}
                </button>
              ))}
            </div>
            <div className="flex h-5 items-center justify-between px-1">
              <Tool icon="zoom" label="Zoom out" className="w-3" />
              <input type="range" aria-label="Strip width" defaultValue={30} className={clsx(rangeTrack, slimThumb, 'h-[9px] w-14')} />
              <Tool icon="zoom" label="Zoom in" className="w-3" />
            </div>
          </div>
          <div className="flex w-[42px] flex-col">
            <div className="flex min-h-0 flex-1 flex-col overflow-hidden bg-[#262626] pl-0.5 text-[#d8d8d8]">
              <span className="mt-[3px] whitespace-nowrap text-[6px] leading-[8px]">プレビュー</span>
              <span className="mt-1.5 whitespace-nowrap pl-px font-['Lato',sans-serif] text-[7px] leading-[9px]">Microsoft So</span>
              <div className="mt-auto flex h-[56px] justify-center gap-px pr-1">
                <span className="my-0.5 w-1 bg-[repeating-linear-gradient(#4a4a4a_0,#4a4a4a_1px,transparent_1px,transparent_5px)]" />
                <input
                  type="range"
                  aria-label="Preview volume"
                  defaultValue={36}
                  className="h-[56px] w-[9px] appearance-none bg-[linear-gradient(#4c4c4c,#4c4c4c)] bg-[length:2px_100%] bg-center bg-no-repeat [direction:rtl] [writing-mode:vertical-lr] [&::-webkit-slider-thumb]:h-[11px] [&::-webkit-slider-thumb]:w-[8px] [&::-webkit-slider-thumb]:appearance-none [&::-webkit-slider-thumb]:bg-[linear-gradient(#c8c8c8_4px,#555_4px,#555_7px,#c8c8c8_7px)]"
                />
              </div>
              <span className="mt-1 text-center text-[7px] leading-[10px] text-[#808080]">-6.0</span>
              <span className="my-0.5 whitespace-nowrap text-[6px] leading-[8px]">プレビュー</span>
            </div>
            <div className="flex h-[10px] items-center justify-between bg-[#2b2b2b]">
              <ScrollButton icon="left" label="Scroll left" />
              <span className="ml-0.5 mr-auto h-2 w-2 bg-[#3c3c3c]" />
              <ScrollButton icon="right" label="Scroll right" />
            </div>
          </div>
        </div>
      </div>
    </section>
  )
}

/* ---------- loudness meters ---------- */

type Loudness = { name: string; peak: string; cover: [number, number]; coverClass: string }

const MAUVE = 'bg-linear-to-b from-[#745b70] to-[#6b6670]'

const meters: Loudness[] = [
  { name: 'M', peak: '17.3', cover: [0, 18.4], coverClass: MAUVE },
  { name: 'S', peak: '16.3', cover: [0, 21], coverClass: MAUVE },
  { name: 'I', peak: '16.5', cover: [0, 0], coverClass: '' },
  { name: 'LRA', peak: '22.5', cover: [22, 100], coverClass: 'bg-linear-to-b from-[#6d6d72] via-[#748484] via-20% to-[#748484]' },
]

const scale = ['9', '6', '3', '0', '-3', '-6', '-9', '-12', '-15', '-18']

function LoudnessMeters() {
  return (
    <aside className="flex w-[102px] shrink-0 bg-[#373737]">
      <div className="flex w-[13px] shrink-0 justify-start">
        <PanelGrip />
      </div>
      <div className="flex flex-1 justify-between pr-1">
        {meters.map((m) => {
          const [from, to] = m.cover
          return (
            <div key={m.name} className="flex w-[15px] flex-col items-center text-[7px] text-[#c8c8c8]">
              <span className="h-[9px] leading-[10px]">{m.peak}</span>
              <div className="relative w-full flex-1 border-t border-[#999] bg-[linear-gradient(#ff0cff_0%,#f21cff_4%,#6f80ff_18%,#22c8ff_28%,#00f0ff_35%)]">
                {to > from ? (
                  <div
                    className={clsx('absolute inset-x-0', m.coverClass, from === 0 && 'border-b border-[#262c50]')}
                    style={{ top: `${from}%`, height: `${to - from}%` }}
                  />
                ) : null}
                <div className="relative flex h-full flex-col">
                  {scale.map((s, i) => {
                    const at = i * 10 + 3.5
                    const covered = at >= from && at < to
                    return (
                      <span
                        key={s}
                        className={clsx(
                          'flex min-h-0 flex-1 items-start justify-end pt-[15px] leading-[10px]',
                          covered ? 'text-[#e2e2e2]' : 'text-[#123a5c]',
                        )}
                      >
                        {s}
                        <span className="ml-px mt-1 h-px w-px bg-current" />
                      </span>
                    )
                  })}
                </div>
              </div>
              <span className="h-[11px] leading-[12px]">{m.name}</span>
            </div>
          )
        })}
      </div>
    </aside>
  )
}

export default function App() {
  const [selected, setSelected] = useState(4)

  return (
    <div className="flex h-screen overflow-hidden bg-[#1e1e1e] font-['Noto_Sans','Noto_Sans_CJK_JP',sans-serif] leading-none">
      <div className="w-0.5 shrink-0 bg-linear-to-b from-[#12414c] via-[#155a86] to-[#1a3658]" />
      <div className="flex min-w-0 flex-1 flex-col">
        <TitleBar />
        <div className="flex min-h-0 flex-1 pl-0.5">
          <div className="flex min-w-0 flex-1 flex-col">
            <Toolbar />
            <main className="flex min-h-0 flex-1 gap-0.5 pr-0.5">
              <TrackList selected={selected} onSelect={setSelected} />
              <Timeline selected={selected} />
            </main>
            <div className="mt-[3px] flex h-[187px] shrink-0 gap-px">
              <Explorer />
              <Mixer selected={selected} />
            </div>
          </div>
          <LoudnessMeters />
        </div>
        <footer className="flex h-[13px] shrink-0 items-center justify-end border-t border-[#1c1c1c] bg-[#262626] pr-2.5 text-[7px] text-[#dcdcdc]">
          <Icon name="drive" className="size-2" />
          <span className="ml-1 mr-4">18/32,605 MB</span>
          <span>録音時間 (2 チャンネル): 562:21:15</span>
        </footer>
      </div>
    </div>
  )
}
